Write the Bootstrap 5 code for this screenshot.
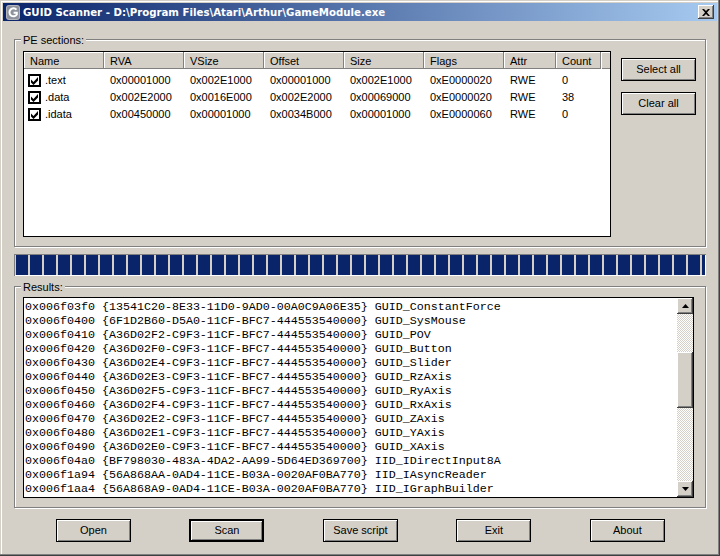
<!DOCTYPE html>
<html lang="en">
<head>
    <meta charset="UTF-8">
    <meta name="viewport" content="width=device-width, initial-scale=1.0">
    <title>GUID Scanner</title>
    <link href="https://cdn.jsdelivr.net/npm/bootstrap@5.3.0/dist/css/bootstrap.min.css" rel="stylesheet">
    <style>
        html, body { margin: 0; height: 100%; background-color: #d4d0c8; }
        body { font-family: "Liberation Sans", Arial, sans-serif; font-size: 11px; line-height: 13px; color: #000; overflow: hidden; }
        .app-window { width: 720px; height: 556px; background-color: #d4d0c8; padding: 3px 3px 0; box-shadow: inset -1px -1px 0 #404040, inset -2px -2px 0 #808080, inset 1px 1px 0 #d4d0c8, inset 2px 2px 0 #fff; }
        .title-bar { height: 18px; padding: 0 3px 0 3px; background: linear-gradient(90deg, #0a246a, #a6caf0); color: #fff; font-family: "DejaVu Sans", sans-serif; font-weight: 700; font-size: 10.2px; white-space: nowrap; }
        .title-text { margin-left: 3px; }
        .app-icon { width: 14px; height: 15px; flex: none; }
        .close-box { width: 16px; height: 14px; background-color: #d4d0c8; box-shadow: inset -1px -1px 0 #404040, inset 1px 1px 0 #fff, inset -2px -2px 0 #808080; }
        .group-box { position: relative; width: 692px; margin-left: 11px; border: 1px solid #808080; box-shadow: inset 1px 1px 0 #fff, 1px 1px 0 #fff; }
        .group-title { position: absolute; left: 6px; top: -6px; padding: 0 2px; background-color: #d4d0c8; }
        .group-pe { height: 208px; margin-top: 18px; padding: 11px 8px 0; }
        .group-results { height: 222px; margin-top: 10px; padding: 10px 8px 0; }
        .list-box { width: 588px; height: 186px; background-color: #fff; border: 1px solid #000; }
        .list-head { height: 17px; background-color: #d4d0c8; }
        .head-cell { height: 17px; padding: 3px 0 0 6px; flex: none; box-shadow: inset -1px -1px 0 #808080, inset 1px 1px 0 #fff; }
        .head-fill { flex: 1; height: 17px; box-shadow: inset 1px 1px 0 #fff, inset 0 -1px 0 #808080; }
        .list-row { height: 17px; padding-top: 2px; }
        .list-rows { padding-top: 3px; }
        .list-cell { flex: none; padding-left: 6px; }
        .w-name { width: 80px; } .w-col { width: 80px; } .w-attr { width: 52px; } .w-count { width: 45px; }
        .w-name.list-cell { padding-left: 4px; display: flex; gap: 4px; }
        .tick-box { width: 13px; height: 13px; flex: none; }
        .side-buttons { width: 75px; margin-left: 10px; padding-top: 7px; gap: 11px; }
        .win-btn { width: 75px; height: 23px; padding: 0; background-color: #d4d0c8; color: #000; font-size: 11px; line-height: 13px; border: 1px solid #000; border-radius: 0; box-shadow: inset 1px 1px 0 #fff, inset -1px -1px 0 #808080; }
        .win-btn-default { border-width: 2px; box-shadow: inset 1px 1px 0 #fff, inset -1px -1px 0 #808080; }
        .scan-progress { width: 692px; height: 22px; margin: 7px 0 0 11px; padding: 1px; border-radius: 0; background-color: #d4d0c8; box-shadow: inset 1px 1px 0 #808080, inset -1px -1px 0 #fff; }
        .scan-bar { width: 100%; background-color: transparent; background-image: repeating-linear-gradient(90deg, #0a246a 0 12px, transparent 12px 14px); margin-left: 1px; }
        .result-box { width: 671px; height: 201px; background-color: #fff; border: 1px solid #000; }
        .result-text { flex: 1; margin: 0; padding: 2px 0 0 1px; font-family: "Liberation Mono", "Courier New", monospace; font-size: 11.67px; line-height: 14px; overflow: hidden; white-space: pre; }
        .scroll-col { width: 16px; flex: none; background-color: #fff; background-image: repeating-conic-gradient(#d4d0c8 0 25%, #fff 0 50%); background-size: 2px 2px; }
        .scroll-btn { width: 16px; height: 16px; flex: none; background-color: #d4d0c8; box-shadow: inset -1px -1px 0 #404040, inset 1px 1px 0 #fff, inset -2px -2px 0 #808080; }
        .scroll-thumb { width: 16px; height: 56px; flex: none; margin-top: 38px; background-color: #d4d0c8; box-shadow: inset -1px -1px 0 #404040, inset 1px 1px 0 #fff, inset -2px -2px 0 #808080; }
        .button-row { margin-top: 11px; padding: 0 52.2px 0 53px; }
    </style>
</head>
<body>

<div class="app-window d-flex flex-column">
    <div class="title-bar d-flex align-items-center">
        <svg class="app-icon" viewBox="0 0 14 15">
            <rect x="0" y="0" width="14" height="15" rx="3" fill="#b4b6bc"/>
            <rect x="1" y="1" width="12" height="13" rx="2" fill="#8e929c"/>
            <path d="M10.500 4.700A4 4 0 1 0 10.800 9.500V7.700H7.600" fill="none" stroke="#fff" stroke-width="2"/>
        </svg>
        <span class="title-text flex-grow-1">GUID Scanner - D:\Program Files\Atari\Arthur\GameModule.exe</span>
        <div class="close-box d-flex align-items-center justify-content-center">
            <svg width="8" height="7" viewBox="0 0 8 7"><path d="M0 0h2l2 2 2-2h2L5 3.500 8 7H6L4 5 2 7H0l3-3.500z" fill="#000"/></svg>
        </div>
    </div>

    <div class="group-box group-pe d-flex">
        <span class="group-title">PE sections:</span>
        <div class="list-box">
            <div class="list-head d-flex">
                <div class="head-cell w-name">Name</div>
                <div class="head-cell w-col">RVA</div>
                <div class="head-cell w-col">VSize</div>
                <div class="head-cell w-col">Offset</div>
                <div class="head-cell w-col">Size</div>
                <div class="head-cell w-col">Flags</div>
                <div class="head-cell w-attr">Attr</div>
                <div class="head-cell w-count">Count</div>
                <div class="head-fill"></div>
            </div>
            <div class="list-rows" id="sectionRows"></div>
        </div>
        <div class="side-buttons d-flex flex-column">
            <button type="button" class="btn win-btn">Select all</button>
            <button type="button" class="btn win-btn">Clear all</button>
        </div>
    </div>

    <div class="progress scan-progress">
        <div class="progress-bar scan-bar"></div>
    </div>

    <div class="group-box group-results">
        <span class="group-title">Results:</span>
        <div class="result-box d-flex">
            <pre class="result-text">0x006f03f0 {13541C20-8E33-11D0-9AD0-00A0C9A06E35} GUID_ConstantForce
0x006f0400 {6F1D2B60-D5A0-11CF-BFC7-444553540000} GUID_SysMouse
0x006f0410 {A36D02F2-C9F3-11CF-BFC7-444553540000} GUID_POV
0x006f0420 {A36D02F0-C9F3-11CF-BFC7-444553540000} GUID_Button
0x006f0430 {A36D02E4-C9F3-11CF-BFC7-444553540000} GUID_Slider
0x006f0440 {A36D02E3-C9F3-11CF-BFC7-444553540000} GUID_RzAxis
0x006f0450 {A36D02F5-C9F3-11CF-BFC7-444553540000} GUID_RyAxis
0x006f0460 {A36D02F4-C9F3-11CF-BFC7-444553540000} GUID_RxAxis
0x006f0470 {A36D02E2-C9F3-11CF-BFC7-444553540000} GUID_ZAxis
0x006f0480 {A36D02E1-C9F3-11CF-BFC7-444553540000} GUID_YAxis
0x006f0490 {A36D02E0-C9F3-11CF-BFC7-444553540000} GUID_XAxis
0x006f04a0 {BF798030-483A-4DA2-AA99-5D64ED369700} IID_IDirectInput8A
0x006f1a94 {56A868AA-0AD4-11CE-B03A-0020AF0BA770} IID_IAsyncReader
0x006f1aa4 {56A868A9-0AD4-11CE-B03A-0020AF0BA770} IID_IGraphBuilder</pre>
            <div class="scroll-col d-flex flex-column">
                <div class="scroll-btn d-flex align-items-center justify-content-center">
                    <svg width="7" height="4" viewBox="0 0 7 4"><path d="M3.500 0L7 4H0z" fill="#000"/></svg>
                </div>
                <div class="scroll-thumb"></div>
                <div class="flex-grow-1"></div>
                <div class="scroll-btn d-flex align-items-center justify-content-center">
                    <svg width="7" height="4" viewBox="0 0 7 4"><path d="M0 0h7L3.500 4z" fill="#000"/></svg>
                </div>
            </div>
        </div>
    </div>

    <div class="button-row d-flex justify-content-between">
        <button type="button" class="btn win-btn">Open</button>
        <button type="button" class="btn win-btn win-btn-default">Scan</button>
        <button type="button" class="btn win-btn">Save script</button>
        <button type="button" class="btn win-btn">Exit</button>
        <button type="button" class="btn win-btn">About</button>
    </div>
</div>

<script>
    const sections = [
        [".text", "0x00001000", "0x002E1000", "0x00001000", "0x002E1000", "0xE0000020", "RWE", "0"],
        [".data", "0x002E2000", "0x0016E000", "0x002E2000", "0x00069000", "0xE0000020", "RWE", "38"],
        [".idata", "0x00450000", "0x00001000", "0x0034B000", "0x00001000", "0xE0000060", "RWE", "0"]
    ];
    const tick = `<svg class="tick-box" viewBox="0 0 13 13"><rect x="1" y="1" width="11" height="11" fill="#fff" stroke="#000" stroke-width="2"/><path d="M3 5.500l2.500 2.500L10 3v3.500L5.500 11 3 8.500z" fill="#000"/></svg>`;
    document.getElementById("sectionRows").innerHTML = sections.map(s => `
        <div class="list-row d-flex">
            <div class="list-cell w-name">${tick}<span>${s[0]}</span></div>
            <div class="list-cell w-col">${s[1]}</div>
            <div class="list-cell w-col">${s[2]}</div>
            <div class="list-cell w-col">${s[3]}</div>
            <div class="list-cell w-col">${s[4]}</div>
            <div class="list-cell w-col">${s[5]}</div>
            <div class="list-cell w-attr">${s[6]}</div>
            <div class="list-cell w-count">${s[7]}</div>
        </div>
    `).join('');
</script>

</body>
</html>
